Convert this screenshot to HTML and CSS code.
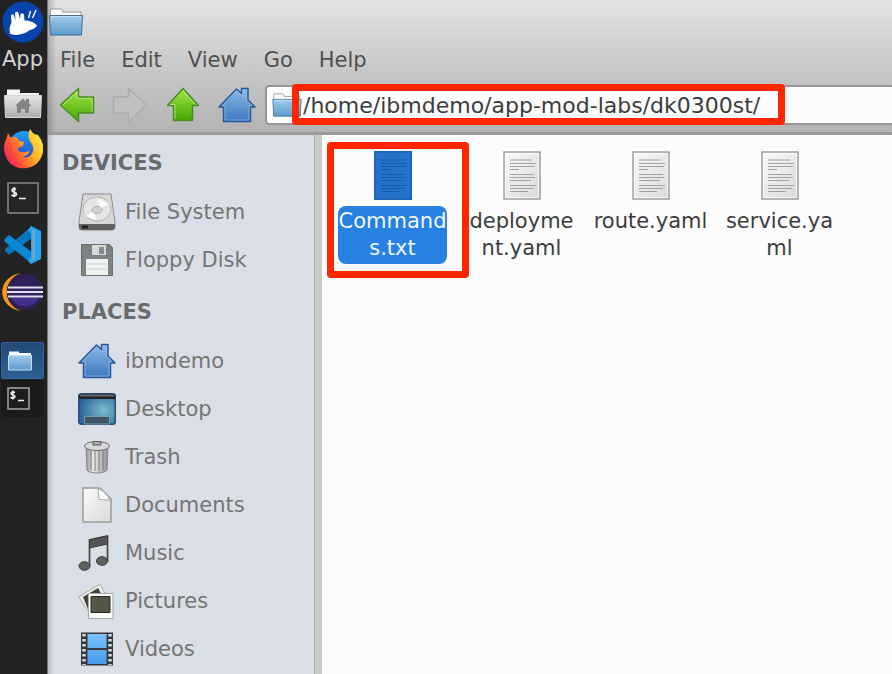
FILE: index.html
```html
<!DOCTYPE html>
<html lang="en">
<head>
<meta charset="utf-8">
<title>dk0300st - File Manager</title>
<link rel="stylesheet" href="styles.css">
</head>
<body>
<svg class="defs" aria-hidden="true">
  <defs>
    <linearGradient id="blue" x1="0" y1="0" x2="0" y2="1"><stop offset="0" stop-color="#8cb9e8"/><stop offset="1" stop-color="#3c78bd"/></linearGradient>
    <linearGradient id="folderblue" x1="0" y1="0" x2="0" y2="1"><stop offset="0" stop-color="#a3cbea"/><stop offset="1" stop-color="#5e9bce"/></linearGradient>
    <linearGradient id="green" x1="0" y1="0" x2="0" y2="1"><stop offset="0" stop-color="#a2e64a"/><stop offset="1" stop-color="#45a800"/></linearGradient>
    <linearGradient id="paper" x1="0" y1="0" x2="1" y2="1"><stop offset="0" stop-color="#fafafa"/><stop offset="1" stop-color="#d9d9d9"/></linearGradient>
    <linearGradient id="silver" x1="0" y1="0" x2="0" y2="1"><stop offset="0" stop-color="#e4e4e4"/><stop offset="1" stop-color="#b0b0b0"/></linearGradient>
    <linearGradient id="can" x1="0" y1="0" x2="1" y2="0"><stop offset="0" stop-color="#929292"/><stop offset=".35" stop-color="#eee"/><stop offset="1" stop-color="#8d8d8d"/></linearGradient>
    <linearGradient id="flame" x1="1" y1=".2" x2="0" y2=".8"><stop offset="0" stop-color="#fff04a"/><stop offset=".4" stop-color="#ffad25"/><stop offset=".75" stop-color="#ff4a38"/><stop offset="1" stop-color="#f01a70"/></linearGradient>
    <linearGradient id="globe" x1="0" y1="0" x2="0" y2="1"><stop offset="0" stop-color="#18a0fa"/><stop offset="1" stop-color="#2a3fc0"/></linearGradient>
    <radialGradient id="screen" cx=".68" cy=".55" r=".7"><stop offset="0" stop-color="#79bfca"/><stop offset="1" stop-color="#295f9c"/></radialGradient>
    <linearGradient id="film" x1="0" y1="0" x2="0" y2="1"><stop offset="0" stop-color="#7bc2fb"/><stop offset="1" stop-color="#489bee"/></linearGradient>
    <symbol id="folder" viewBox="0 0 34 28">
      <path d="M1.500 6V2.500Q1.500 1 3 1h9q1.500 0 1.500 1.500V4H32v5H1.500z" fill="#f8f8f8" stroke="#929da5"/>
      <path d="M.5 7.500h33L32.500 27h-31z" fill="url(#folderblue)" stroke="#496f8f"/>
      <path d="M2 8.500h30" stroke="#c6e1f5"/>
    </symbol>
    <symbol id="house" viewBox="0 0 38 36">
      <path d="M5.500 34.500V20H1L18.500 2l5 4.500V1.500h6.500V13l7 7h-4.500v14.500z" fill="url(#blue)" stroke="#29579a" stroke-width="1.500" stroke-linejoin="round"/>
      <path d="M7 33V18.500H4.500L18.500 4l6.500 6V3h3.500v10.500l5.500 5h-3V33z" fill="none" stroke="#9bc2ed" stroke-opacity=".65"/>
    </symbol>
    <symbol id="textfile" viewBox="0 0 38 49">
      <path d="M1 1h36v47H1z" fill="url(#paper)" stroke="#a0a0a0" stroke-width="1.500"/>
      <path d="M2.500 2.500h33v44h-33z" fill="none" stroke="#fff" stroke-opacity=".7"/>
      <path d="M7 9h22M7 12.500h26M7 15.500h25M7 18.500h9M7 23.500h24M7 26.500h25M7 29.500h21M7 34.500h26M7 37.500h24M7 40.500h18" stroke="#a2a2a2"/>
    </symbol>
    <symbol id="prompt" viewBox="0 0 32 32">
      <path d="M1 1h30v30H1z" fill="#252525" stroke="#8a8a8a" stroke-width="1.500"/>
      <path d="M9 7.500C7 6 5 7 5 8.500c0 2.500 4.500 1 4.500 3.500 0 2-3 2.500-5 1M7.300 5v10M12 16.500h7" fill="none" stroke="#eee" stroke-width="1.700"/>
    </symbol>
  </defs>
</svg>

<div class="desktop">
  <nav class="dock" aria-label="Panel">
    <button class="launcher" aria-label="Applications">
      <svg width="42" height="42" viewBox="0 0 42 42"><circle cx="21" cy="21" r="20.500" fill="#0745ad"/><path d="M8 32C7 28 8 24 9.500 22L9 14.500q1.500-2.500 3 0l1.500 5L13 12q1.500-2.500 3.500 0l1.500 6.500 .5-5.500q2.500-2 3.500 1l.5 5.500c5-.5 10 2 12.500 5-1 2-4 4-8 5-3 3-13 6-18 3.500q-1.500-.5-2-1z" fill="#fff"/><path d="M26.500 17l2-7M30.500 17l3.500-8" stroke="#e8eefb" stroke-width="1.500"/></svg>
      <span>App</span>
    </button>
    <button class="slot" aria-label="Home folder">
      <svg width="38" height="31" viewBox="0 0 38 31"><path d="M3 6V1.500h13V5h19v5H3z" fill="#f4f4f4"/><path d="M.5 7.500h37l-1 22h-35z" fill="url(#silver)" stroke="#d7d7d7"/><path d="M11 18l8-7.500 3 3V11h3v4.500l2.500 2.500H25v7h-4v-4h-4v4h-4v-7z" fill="#858585"/></svg>
    </button>
    <button class="slot" aria-label="Firefox">
      <svg width="40" height="44" viewBox="0 0 40 44"><circle cx="21" cy="18" r="16" fill="url(#globe)"/><path d="M5 4l3 5q2-1.500 5-1l3.500 4 4.500 1-1 4-5 2q-1 3 3 4 5 .5 9-1-2 5-8 6 6 1.500 9-2 4-5 1-11-6-7-2-15 2 4 6 6l1-1c9 10 7 20 2 27-7 9-22 10-30 1C0 25 0 15 3 11z" fill="url(#flame)"/></svg>
    </button>
    <button class="slot" aria-label="Terminal"><svg width="32" height="32"><use href="#prompt"/></svg></button>
    <button class="slot" aria-label="Visual Studio Code">
      <svg width="38" height="38" viewBox="0 0 38 38"><path d="M1 25l4 4L28 12V0L1 23z" fill="#0874bd"/><path d="M0 13.500l5-4.500 23 17v12L1 16z" fill="#0b87d4"/><path d="M27 0l10 5v28l-10 5-3-3 3-5V8l-3-4z" fill="#27a5ef"/><path d="M29.500 4v30" stroke="#8fa7b7" stroke-width="2"/></svg>
    </button>
    <button class="slot" aria-label="Eclipse">
      <svg width="42" height="38" viewBox="0 0 42 38"><path d="M19 0C-6 4-6 34 19 38 0 31 0 7 19 0z" fill="#f59b1c"/><circle cx="23" cy="19" r="18" fill="#2d2158"/><path d="M9 25h28c-6 11-22 11-28 0z" fill="#43318a"/><path d="M6 14.500h35M5 19h36M6 23.500h35" stroke="#e2def0" stroke-width="2"/></svg>
    </button>
    <div class="dock-gap"></div>
    <button class="task active" aria-label="File Manager window"><svg width="24" height="21" viewBox="0 0 24 21"><path d="M1 5V1.500h10V3h12v3H1z" fill="#f8fbfd"/><path d="M.5 5.500h23V20H.5z" fill="url(#folderblue)" stroke="#c7dff1"/></svg></button>
    <button class="task" aria-label="Terminal window"><svg width="23" height="23" viewBox="0 0 23 23"><path d="M1 1h21v21H1z" fill="#1d1d1d" stroke="#a5a5a5" stroke-width="1.500"/><path d="M8 5.500C6 4.500 4 5 4 6.500c0 2 4 1 4 3 0 1.500-2.500 2-4.500 1M6 3.500v9M11 13.500h6" fill="none" stroke="#eee" stroke-width="1.500"/></svg></button>
  </nav>

  <main class="window">
    <header class="chrome">
      <div class="titlebar"><svg width="34" height="28"><use href="#folder"/></svg></div>
      <nav class="menubar" aria-label="Menu"><button>File</button><button>Edit</button><button>View</button><button>Go</button><button>Help</button></nav>
      <div class="toolbar">
        <button aria-label="Back"><svg width="36" height="36" viewBox="0 0 36 36"><path d="M1.500 18L19.500 1.500V10H34.500v16H19.500v8.500z" fill="url(#green)" stroke="#4b8d25" stroke-width="1.500" stroke-linejoin="round"/><path d="M4 18L18 5v6.500h15v13" fill="none" stroke="#c5f195" stroke-opacity=".7"/></svg></button>
        <button aria-label="Forward" disabled><svg width="36" height="36" viewBox="0 0 36 36"><path d="M34.500 18l-18-16.500V10h-15v16h15v8.500z" fill="#bfc0bf" stroke="#acaeac" stroke-width="1.500" stroke-linejoin="round"/></svg></button>
        <button aria-label="Up"><svg width="36" height="36" viewBox="0 0 36 36"><path d="M18 1.500L33.500 18.500H27.500v15h-19v-15H2.500z" fill="url(#green)" stroke="#4b8d25" stroke-width="1.500" stroke-linejoin="round"/><path d="M5 17.500h5V32M18 4l12.500 13.500" fill="none" stroke="#c5f195" stroke-opacity=".7"/></svg></button>
        <button aria-label="Home"><svg width="38" height="36"><use href="#house"/></svg></button>
        <label class="location"><svg width="32" height="24"><use href="#folder"/></svg><input type="text" aria-label="Location" value="/home/ibmdemo/app-mod-labs/dk0300st/"></label>
        <span class="mark mark-path"></span>
      </div>
    </header>
    <div class="panes">
      <aside class="sidebar">
        <h2>DEVICES</h2>
        <ul>
          <li><a href="#"><svg width="38" height="38" viewBox="0 0 38 38"><path d="M5 1h28l4 28v5q0 3-3 3H4q-3 0-3-3v-5z" fill="#d7d7d7" stroke="#8a8a8a"/><path d="M1 31h36v3q0 3-3 3H4q-3 0-3-3z" fill="#626262"/><path d="M4 34h6" stroke="#202020" stroke-width="3"/><ellipse cx="19" cy="16" rx="14" ry="12" fill="#e4e4e4" stroke="#b6b6b6"/><path d="M19 5l12 6-9 4zM7 23l9-5 2 9z" fill="#f8f8f8"/><ellipse cx="19" cy="17" rx="5" ry="3.500" fill="#d2d2d2" stroke="#aaa"/></svg>File System</a></li>
          <li><a href="#"><svg width="38" height="32" viewBox="0 0 38 32"><path d="M3.500.5h28l3 3v28h-31z" fill="#7c8184" stroke="#6a6f72"/><path d="M14 1h14v10H14z" fill="#d7d9da"/><path d="M21 3h5v7h-5z" fill="#858a8d"/><path d="M8 15h22v16H8z" fill="#f0f1f1"/><path d="M9 20h20M9 25h20" stroke="#c8cacb"/></svg>Floppy Disk</a></li>
        </ul>
        <h2>PLACES</h2>
        <ul>
          <li><a href="#"><svg width="38" height="36"><use href="#house"/></svg>ibmdemo</a></li>
          <li><a href="#"><svg width="38" height="32" viewBox="0 0 38 32"><rect x=".7" y=".7" width="36.600" height="30.600" rx="2.500" fill="url(#screen)" stroke="#274a72" stroke-width="1.400"/><path d="M1 6V3q0-2 2-2h32q2 0 2 2v3z" fill="#202224"/><path d="M2 2.500h34" stroke="#686b6d" stroke-width="2"/><path d="M6.500 31v-7.500h25V31z" fill="#405563" stroke="#6e9ab4"/></svg>Desktop</a></li>
          <li><a href="#"><svg width="38" height="34" viewBox="0 0 38 34"><path d="M8 7h22l-1 23c-2 4-18 4-20 0z" fill="url(#can)" stroke="#858585"/><path d="M13 10v20M17 10v21M21 10v21M25 10v20" stroke="#85858a" stroke-width="1.200"/><ellipse cx="19" cy="6" rx="12.500" ry="4.500" fill="#d8d8d8" stroke="#707070"/><path d="M15 5V1.500h8V5z" fill="#aaa" stroke="#5d5d5d"/></svg>Trash</a></li>
          <li><a href="#"><svg width="38" height="36" viewBox="0 0 38 36"><path d="M5 1h17l11 11v23H5z" fill="url(#paper)" stroke="#999b9d" stroke-width="1.500"/><path d="M20 1.500l1 11 11 .5Q28 5 20 1.500z" fill="#fff" stroke="#aaa"/></svg>Documents</a></li>
          <li><a href="#"><svg width="38" height="36" viewBox="0 0 38 36"><path d="M11.500 31V5l18-4v26" fill="none" stroke="#454545" stroke-width="1.700"/><path d="M11.500 5l18-4v8l-18 4z" fill="#555" stroke="#3c3c3c"/><ellipse cx="6.500" cy="31" rx="5.500" ry="4.300" fill="#606060" stroke="#3a3a3a"/><ellipse cx="24" cy="26" rx="5.500" ry="4.300" fill="#606060" stroke="#3a3a3a"/></svg>Music</a></li>
          <li><a href="#"><svg width="38" height="36" viewBox="0 0 38 36"><path d="M.7 14L22 1l9 17-20 11z" fill="#eee" stroke="#aaa"/><path d="M5 14L20 5l7 12-17 9z" fill="#414636"/><path d="M10.500 10.500h24.500v25H10.500z" fill="#fafafa" stroke="#a6a6a6"/><path d="M13 13.500h19v16h-19z" fill="#535745" stroke="#292b22"/></svg>Pictures</a></li>
          <li><a href="#"><svg width="38" height="34" viewBox="0 0 38 34"><path d="M3 .5h32v33H3z" fill="#34383b"/><path d="M9.500 2h19v14h-19zM9.500 18h19v14h-19z" fill="url(#film)"/><path d="M6 2v31M32 2v31" stroke="#d5d8da" stroke-width="3.500" stroke-dasharray="2.500 2.500"/></svg>Videos</a></li>
        </ul>
      </aside>
      <section class="files" aria-label="Files">
        <button class="file selected"><svg width="38" height="49" viewBox="0 0 38 49"><path d="M.7.700h36.600v47.600H.7z" fill="#2372c9" stroke="#1d62b2" stroke-width="1.400"/><path d="M7 9h22M7 12.500h26M7 15.500h25M7 18.500h9M7 23.500h24M7 26.500h25M7 29.500h21M7 34.500h26M7 37.500h24M7 40.500h18" stroke="#1a5ba6"/></svg><span>Command<br>s.txt</span><i class="mark mark-file"></i></button>
        <button class="file"><svg width="38" height="49"><use href="#textfile"/></svg><span>deployme<br>nt.yaml</span></button>
        <button class="file"><svg width="38" height="49"><use href="#textfile"/></svg><span>route.yaml</span></button>
        <button class="file"><svg width="38" height="49"><use href="#textfile"/></svg><span>service.ya<br>ml</span></button>
      </section>
    </div>
  </main>
</div>
</body>
</html>
```
FILE: styles.css
```css
* { box-sizing: border-box; }

body {
  margin: 0;
  font: 21px/27px "DejaVu Sans", sans-serif;
  color: #505050;
}

button, input {
  margin: 0;
  padding: 0;
  border: 0;
  background: none;
  font: inherit;
  color: inherit;
}

svg { display: block; flex: none; }
.defs { position: absolute; width: 0; height: 0; }

.desktop {
  display: flex;
  min-height: 100vh;
  overflow: hidden;
}

/* Left panel */
.dock {
  display: flex;
  flex: none;
  flex-direction: column;
  width: 48px;
  padding-right: 2px;
  background: #232323;
  border-right: 1px solid #777;
}

.launcher {
  display: flex;
  flex-direction: column;
  align-items: center;
  gap: 3px;
  height: 80px;
  padding-top: 1px;
  color: #d2d2d2;
}

.slot {
  display: flex;
  align-items: center;
  justify-content: center;
  height: 47px;
}

.dock-gap { height: 27px; }

.task {
  display: flex;
  align-items: center;
  height: 37px;
  margin: 0 1px 1px;
  padding-left: 6px;
  border-radius: 2px;
  background: #1b1b1b;
}

.task.active {
  background: linear-gradient(#234a78, #2d5f95);
  border: 1px solid #2f659f;
}

/* File manager */
.window {
  display: flex;
  flex: 1;
  flex-direction: column;
  min-width: 0;
}

.chrome {
  background: linear-gradient(90deg, rgba(90, 90, 90, .35), transparent 8px), linear-gradient(#e3e3e3, #cbcbcb 60px, #b3b3b3);
  border-bottom: 3px solid #9b9b9b;
}

.titlebar {
  height: 42px;
  padding: 8px 0 0 1px;
}

.menubar {
  display: flex;
  align-items: center;
  gap: 26px;
  height: 36px;
  padding-left: 12px;
}

.toolbar {
  position: relative;
  display: flex;
  align-items: center;
  gap: 17px;
  height: 54px;
  padding-left: 11px;
}

.location {
  display: flex;
  flex: 1;
  align-items: center;
  height: 40px;
  margin-left: -8px;
  padding-left: 4px;
  background: #fcfcfc;
  border: 2px solid #969696;
  border-right: 0;
  border-radius: 4px 0 0 4px;
}

.location input {
  flex: 1;
  min-width: 0;
  font-size: 22px;
  color: #3c3c3c;
}

.mark {
  position: absolute;
  border: 7px solid #ff2600;
  border-radius: 4px;
  pointer-events: none;
}

.mark-path {
  top: 6px;
  left: 244px;
  width: 493px;
  height: 41px;
}

.mark-file {
  top: -9px;
  left: -1px;
  width: 142px;
  height: 136px;
}

.panes {
  display: flex;
  flex: 1;
}

.sidebar {
  flex: none;
  width: 274px;
  background: linear-gradient(90deg, #b8bdc5, #dadfe7 6px);
  border-right: 7px solid #cbcbcb;
  box-shadow: inset -1px 0 #b0b3b7;
  color: #757575;
}

.sidebar h2 {
  margin: 0;
  padding: 16px 14px 13px;
  font-size: 21px;
  line-height: 24px;
  color: #696b6d;
}

.sidebar ul {
  margin: 0;
  padding: 0;
  list-style: none;
}

.sidebar a {
  display: flex;
  align-items: center;
  gap: 9px;
  height: 48px;
  padding-left: 30px;
  color: inherit;
  text-decoration: none;
}

.files {
  display: flex;
  flex: 1;
  flex-wrap: wrap;
  align-content: flex-start;
  padding: 16px 6px;
  background: #fcfcfc;
  color: #3c3c3c;
}

.file {
  position: relative;
  display: flex;
  flex-direction: column;
  align-items: center;
  gap: 6px;
  width: 129px;
}

.file span {
  padding: 2px 1px;
  border-radius: 8px;
}

.file.selected span {
  background: #2681e1;
  color: #f2f7fd;
}
```
